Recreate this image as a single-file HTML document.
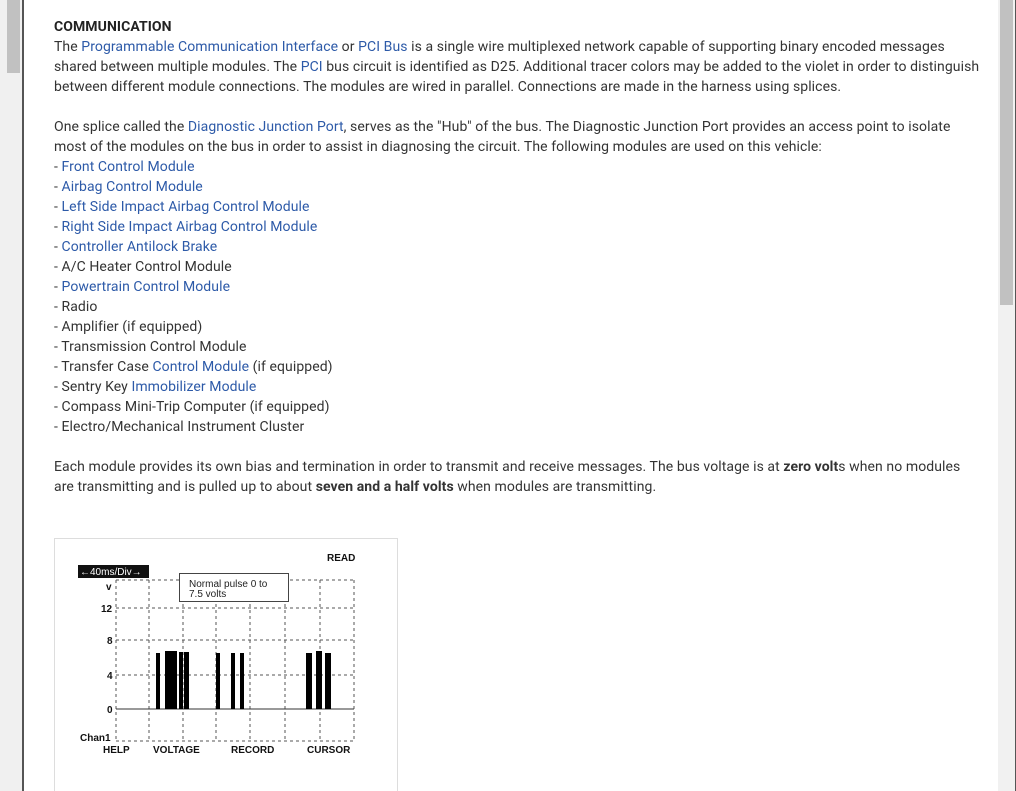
<!DOCTYPE html>
<html><head><meta charset="utf-8"><style>
html,body{margin:0;padding:0;width:1016px;height:791px;overflow:hidden;background:#fff;font-family:"Roboto","Liberation Sans",sans-serif;}
.lstrip{position:absolute;left:0;top:0;width:22px;height:791px;background:#f0f0f0;}
.lthumb{position:absolute;left:7px;top:0;width:13px;height:73px;background:#c1c1c1;}
.lline{position:absolute;left:22px;top:0;width:2px;height:791px;background:#555;}
.rtrack{position:absolute;left:998px;top:0;width:17px;height:791px;background:#f1f1f1;}
.rthumb{position:absolute;left:1000px;top:0;width:13px;height:305px;background:#c1c1c1;}
.rline{position:absolute;left:1015px;top:0;width:1px;height:791px;background:#555;}
.c{position:absolute;left:54px;top:17px;width:932px;font-size:14px;line-height:20px;color:#333;letter-spacing:0.08px;}
a{color:#2d5aa8;text-decoration:none;}
h4{margin:0;font-size:14px;font-weight:bold;line-height:20px;color:#222;}
p{margin:0 0 20px 0;}
</style></head><body>
<div class="lstrip"><div class="lthumb"></div></div><div class="lline"></div>
<div class="rtrack"></div><div class="rthumb"></div><div class="rline"></div>
<div class="c">
<h4>COMMUNICATION</h4>
<p>The <a>Programmable Communication Interface</a> or <a>PCI Bus</a> is a single wire multiplexed network capable of supporting binary encoded messages shared between multiple modules. The <a>PCI</a> bus circuit is identified as D25. Additional tracer colors may be added to the violet in order to distinguish between different module connections. The modules are wired in parallel. Connections are made in the harness using splices.</p>
<p>One splice called the <a>Diagnostic Junction Port</a>, serves as the "Hub" of the bus. The Diagnostic Junction Port provides an access point to isolate most of the modules on the bus in order to assist in diagnosing the circuit. The following modules are used on this vehicle:<br>
- <a>Front Control Module</a><br>- <a>Airbag Control Module</a><br>- <a>Left Side Impact Airbag Control Module</a><br>- <a>Right Side Impact Airbag Control Module</a><br>- <a>Controller Antilock Brake</a><br>- A/C Heater Control Module<br>- <a>Powertrain Control Module</a><br>- Radio<br>- Amplifier (if equipped)<br>- Transmission Control Module<br>- Transfer Case <a>Control Module</a> (if equipped)<br>- Sentry Key <a>Immobilizer Module</a><br>- Compass Mini-Trip Computer (if equipped)<br>- Electro/Mechanical Instrument Cluster</p>
<p>Each module provides its own bias and termination in order to transmit and receive messages. The bus voltage is at <b>zero volt</b>s when no modules<br>are transmitting and is pulled up to about <b>seven and a half volts</b> when modules are transmitting.</p>
</div>
<svg style="position:absolute;left:0;top:0" width="1016" height="791" font-family="Liberation Sans,sans-serif" font-weight="bold">
<rect x="54.5" y="538.5" width="343" height="260" fill="none" stroke="#ddd"/>
<g stroke="#555" stroke-dasharray="3,3" stroke-width="1" fill="none">
<line x1="116" y1="580" x2="354" y2="580"/><line x1="116" y1="608" x2="354" y2="608"/><line x1="116" y1="640" x2="354" y2="640"/><line x1="116" y1="675" x2="354" y2="675"/><line x1="116" y1="741" x2="354" y2="741"/>
<line x1="116" y1="580" x2="116" y2="741"/><line x1="149" y1="580" x2="149" y2="741"/><line x1="183" y1="580" x2="183" y2="741"/><line x1="216" y1="580" x2="216" y2="741"/><line x1="250" y1="580" x2="250" y2="741"/><line x1="285" y1="580" x2="285" y2="741"/><line x1="320" y1="580" x2="320" y2="741"/><line x1="354" y1="580" x2="354" y2="741"/>
</g>
<line x1="116" y1="709" x2="354" y2="709" stroke="#333"/>
<g fill="#000"><rect x="156" y="653" width="4" height="56"/><rect x="165" y="651" width="12" height="58"/><rect x="179" y="652" width="4" height="57"/><rect x="184" y="652" width="5" height="57"/><rect x="216" y="653" width="4" height="56"/><rect x="231" y="653" width="4" height="56"/><rect x="240" y="653" width="4" height="56"/><rect x="306" y="653" width="6" height="56"/><rect x="316" y="651" width="6" height="58"/><rect x="325" y="653" width="6" height="56"/></g>
<rect x="179.5" y="573.5" width="109" height="28" fill="#fff" stroke="#444"/>
<text x="189" y="587" font-size="10" font-weight="normal" fill="#222">Normal pulse 0 to</text>
<text x="189" y="597" font-size="10" font-weight="normal" fill="#222">7.5 volts</text>
<rect x="78" y="565" width="71" height="13" fill="#111"/>
<text x="80" y="575" font-size="10" font-weight="normal" fill="#fff">←40ms/Div→</text>
<g font-size="10" fill="#111">
<text x="327" y="561">READ</text>
<text x="106" y="590">v</text>
<text x="101" y="612">12</text><text x="107" y="644">8</text><text x="107" y="679">4</text><text x="107" y="713">0</text>
<text x="80" y="741">Chan1</text>
<text x="103" y="753">HELP</text><text x="153" y="753">VOLTAGE</text><text x="231" y="753">RECORD</text><text x="307" y="753">CURSOR</text>
</g>
</svg>
</body></html>
